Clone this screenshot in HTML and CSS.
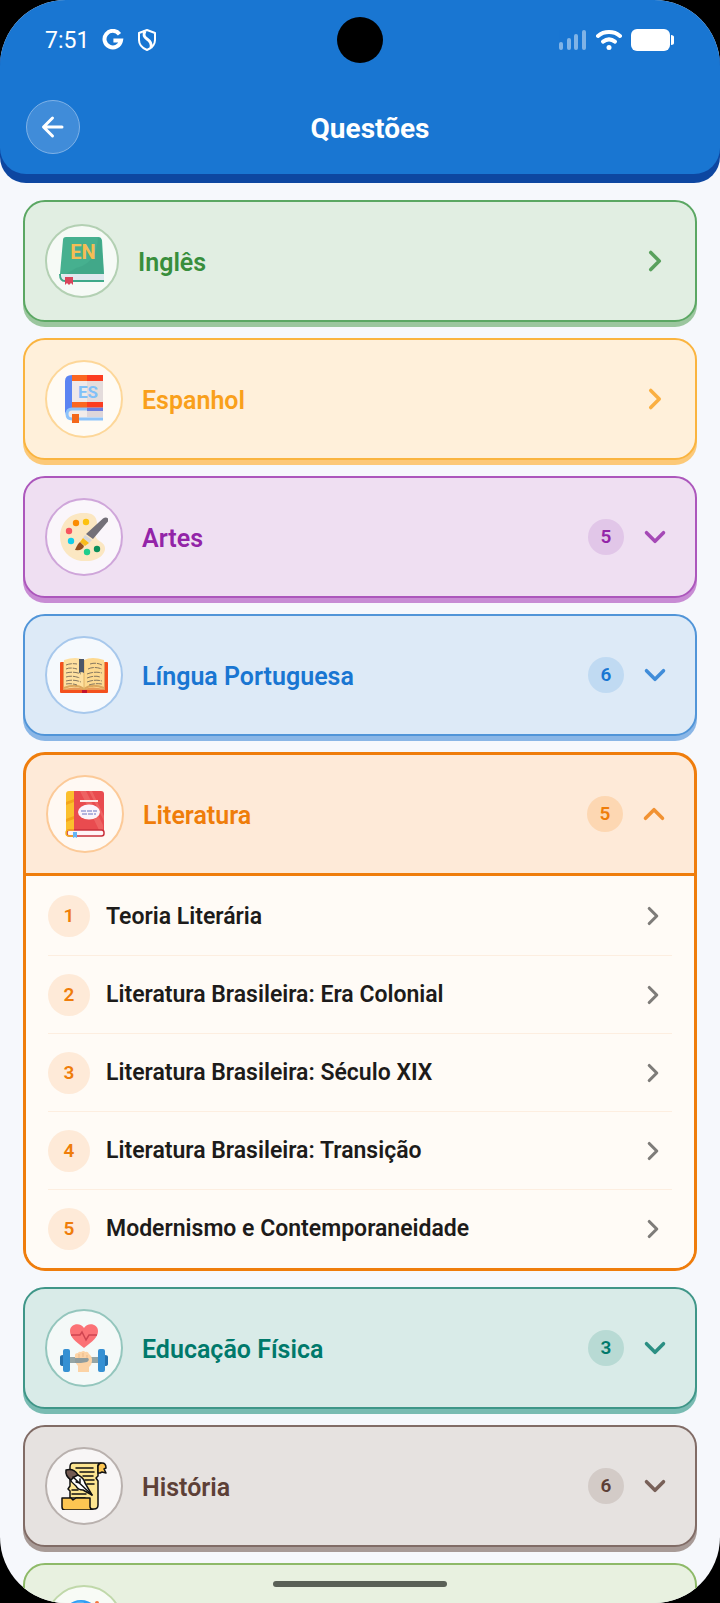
FILE: index.html
```html
<!DOCTYPE html>
<html lang="pt-BR">
<head>
  <meta charset="UTF-8" />
  <meta name="viewport" content="width=device-width, initial-scale=1.0"/>
  <title>Questões</title>
  <link rel="stylesheet" href="styles.css">
</head>
<body>

  <!-- shared icons -->
  <svg class="sprite" aria-hidden="true">
    <symbol id="chevron-right" viewBox="0 0 24 24"><path d="M9 6l6 6-6 6"/></symbol>
    <symbol id="chevron-down" viewBox="0 0 24 24"><path d="M6 9l6 6 6-6"/></symbol>
    <symbol id="chevron-up" viewBox="0 0 24 24"><path d="M6 15l6-6 6 6"/></symbol>
  </svg>

  <div class="screen">
    <header class="app-header">
      <div class="status-bar">
        <div class="status-left">
          <span class="clock">7:51</span>
          <svg width="22" height="22" viewBox="0 0 22 22" fill="none" stroke="#fff" stroke-width="4">
            <path d="M17.5 5.2A8.3 8.3 0 1 0 19 11.6H11.4"/>
          </svg>
          <svg width="20" height="24" viewBox="0 0 20 24" fill="none" stroke="#fff" stroke-width="2" stroke-linejoin="round">
            <path d="M10 2l8 3v7c0 5-3 8-8 10-5-2-8-5-8-10V5z"/>
            <path d="M8 3c-2 4-1 6 2 8s5 5 4 9" stroke-width="3"/>
          </svg>
        </div>
        <div class="camera"></div>
        <div class="status-right">
          <svg width="28" height="20" viewBox="0 0 28 20" fill="#fff" opacity=".45">
            <rect x="0" y="12" width="4" height="8" rx="2"/>
            <rect x="8" y="8" width="4" height="12" rx="2"/>
            <rect x="15" y="4" width="4" height="16" rx="2"/>
            <rect x="23" y="0" width="4" height="20" rx="2"/>
          </svg>
          <svg width="26" height="20" viewBox="0 0 26 20" fill="none" stroke="#fff" stroke-width="4" stroke-linecap="round">
            <path d="M2 6C8 .8 18 .8 24 6"/>
            <path d="M7 11.6c4-3 8-3 12 0"/>
            <circle cx="13" cy="17.4" r="2.5" fill="#fff" stroke="none"/>
          </svg>
          <svg width="44" height="22" viewBox="0 0 44 22" fill="#fff">
            <rect x="0" y="0" width="39" height="22" rx="6"/>
            <path d="M40 6c2 0 3 1 3 2v6c0 1-1 2-3 2z"/>
          </svg>
        </div>
      </div>
      <div class="toolbar">
        <button class="back" type="button" aria-label="Voltar">
          <svg width="28" height="28" viewBox="0 0 28 28" fill="none" stroke="#fff" stroke-width="3" stroke-linecap="round" stroke-linejoin="round">
            <path d="M23 14H5M13.500 5L4.500 14l9 9"/>
          </svg>
        </button>
        <h1>Questões</h1>
      </div>
    </header>

    <main class="subjects">
      <section class="card green">
        <a class="card-head" href="#ingles">
          <span class="avatar small">
            <svg width="48" height="48" viewBox="0 0 48 48">
              <path d="M6 36h40v7H7c-4 0-4-6-1-7z" fill="#dfe8ee"/>
              <path d="M8 0h33q2 0 3 3l2 34H2L5 3q0-3 3-3z" fill="#46b08f"/>
              <path d="M18 31Q38 27 40 1l2 0q1 0 1 3l3 33H8z" fill="#3b9f82" opacity=".45"/>
              <path d="M2 37q0 7 5 7h39" fill="none" stroke="#3fa98a" stroke-width="2"/>
              <path d="M7 40h8v8l-2-2-2 2-2-2-2 2z" fill="#d8455b"/>
              <text class="cover-text" x="25" y="22" font-size="20" fill="#f6bd54">EN</text>
            </svg>
          </span>
          <span class="name">Inglês</span>
          <svg class="chevron"><use href="#chevron-right"/></svg>
        </a>
      </section>

      <section class="card amber">
        <a class="card-head" href="#espanhol">
          <span class="avatar">
            <svg width="48" height="48" viewBox="0 0 48 48">
              <path d="M5 40V6q0-6 7-6v35q-7 0-7 5z" fill="#5b84f2"/>
              <path d="M12 6h31v21H12z" fill="#efe9e9"/>
              <path d="M27 6h16v21H27z" fill="#e4dcdc"/>
              <path d="M12 0h15v6H12zM12 27h15v6H12z" fill="#fb6620"/>
              <path d="M27 0h16v6H27zM27 27h16v6H27z" fill="#fc3d20"/>
              <path d="M43 34H12q-5 0-5 5t5 5h31" fill="#f3ecea" stroke="#8cc3fb" stroke-width="3"/>
              <path d="M27 33h16v3H27z" fill="#6a7cdf"/>
              <path d="M27 36h16v6H27z" fill="#ded6da"/>
              <path d="M12 39h7v9h-7z" fill="#f4681b"/>
              <text class="cover-text" x="28" y="23" font-size="17" fill="#80c0f8">ES</text>
            </svg>
          </span>
          <span class="name">Espanhol</span>
          <svg class="chevron"><use href="#chevron-right"/></svg>
        </a>
      </section>

      <section class="card purple">
        <button class="card-head" type="button" aria-expanded="false">
          <span class="avatar">
            <svg width="48" height="48" viewBox="0 0 48 48">
              <path d="M23 0C35-1 39 7 36 15c-3 7 0 11 5 14s5 8 2 12c-4 6-14 8-22 7C9 46 0 37 0 23 1 9 10 0 23 0z" fill="#fbe7c2"/>
              <circle cx="16" cy="10" r="3.200" fill="#fb8c00"/>
              <circle cx="26" cy="9" r="3.200" fill="#fdc20f"/>
              <circle cx="9" cy="18" r="3.200" fill="#f7555f"/>
              <circle cx="11" cy="28" r="3.200" fill="#12cdea"/>
              <circle cx="27" cy="39" r="3.200" fill="#1fce8c"/>
              <circle cx="37" cy="36" r="3.200" fill="#0b8f5a"/>
              <path d="M43 5.500q3-2 5 0 1 2-1 4L33 26l-7-5z" fill="#737078"/>
              <path d="M25 22l7 5-3 3-6-5z" fill="#d5d8dd"/>
              <path d="M23 25l6 5-4 3-5-4z" fill="#f8bc1c"/>
              <path d="M20 29l4 4q-1 5-9 4 3-7 5-8z" fill="#97501f"/>
            </svg>
          </span>
          <span class="name">Artes</span>
          <span class="count">5</span>
          <svg class="chevron"><use href="#chevron-down"/></svg>
        </button>
      </section>

      <section class="card blue">
        <button class="card-head" type="button" aria-expanded="false">
          <span class="avatar">
            <svg width="48" height="48" viewBox="0 0 48 48">
              <rect x="0" y="11" width="48" height="31" rx="1" fill="#f4511e"/>
              <path d="M3 11h42v28H3z" fill="#e89a58"/>
              <path d="M4 9q12-4 20 0v29q-8-3-20 0z" fill="#fee0a0"/>
              <path d="M44 9Q32 5 24 9v29q8-3 20 0z" fill="#fdd98f"/>
              <path d="M4 37q12-5 20 1 8-6 20-1" fill="none" stroke="#dca85e" stroke-width="2"/>
              <path d="M24 9v29" stroke="#e2b468"/>
              <path d="M6 14q5-2 11-1M6 18q4-2 11 0M6 22q8-2 15 1M6 26q6-2 14 1M6 30q8-2 15 1M6 33q5-1 11 1M30 13q6-2 12 1M28 18q6-3 14 0M27 23q8-3 15-1M27 27q8-3 13-1M27 31q8-3 15-1M29 34q6-2 13-1" fill="none" stroke="#84765f" stroke-dasharray="6 1"/>
              <path d="M19 8h5v14l-2-1-3 1z" fill="#4b5669"/>
              <path d="M22 39h5v3h-5z" fill="#c4122d"/>
            </svg>
          </span>
          <span class="name">Língua Portuguesa</span>
          <span class="count">6</span>
          <svg class="chevron"><use href="#chevron-down"/></svg>
        </button>
      </section>

      <section class="card orange open">
        <button class="card-head" type="button" aria-expanded="true" aria-controls="literatura">
          <span class="avatar">
            <svg width="48" height="48" viewBox="0 0 48 48">
              <path d="M8 1h5v40H5V4q0-3 3-3z" fill="#fbc02d"/>
              <path d="M5 12l8-3v3l-8 3zM5 29l8-3v3l-8 3z" fill="#f4a51b"/>
              <path d="M13 1h27q3 0 3 3v36H13z" fill="#e94b4f"/>
              <path d="M19 1h6l17 34v5h-4zM28 1h3l12 25v5z" fill="#f27370" opacity=".6"/>
              <path d="M19 11h18" stroke="#fdeaea" stroke-width="2"/>
              <ellipse cx="28" cy="22" rx="11" ry="7.500" fill="#fbf3fa"/>
              <path d="M20 21h16M21 24h14" fill="none" stroke="#6a75c4" stroke-dasharray="5 1"/>
              <rect x="6" y="40" width="37" height="6" rx="2.500" fill="#fff5f7" stroke="#c9303b" stroke-width="1.500"/>
              <path d="M13 46H8q-3 0-3-3t3-3h5" fill="none" stroke="#f7b21f" stroke-width="1.500"/>
              <path d="M12 42h4v6l-2-1-2 1z" fill="#64b5f6"/>
            </svg>
          </span>
          <span class="name">Literatura</span>
          <span class="count">5</span>
          <svg class="chevron"><use href="#chevron-up"/></svg>
        </button>
        <ol class="topics" id="literatura">
          <li><a href="#teoria"><span class="num">1</span><span class="topic">Teoria Literária</span><svg class="chevron"><use href="#chevron-right"/></svg></a></li>
          <li><a href="#colonial"><span class="num">2</span><span class="topic">Literatura Brasileira: Era Colonial</span><svg class="chevron"><use href="#chevron-right"/></svg></a></li>
          <li><a href="#seculo-xix"><span class="num">3</span><span class="topic">Literatura Brasileira: Século XIX</span><svg class="chevron"><use href="#chevron-right"/></svg></a></li>
          <li><a href="#transicao"><span class="num">4</span><span class="topic">Literatura Brasileira: Transição</span><svg class="chevron"><use href="#chevron-right"/></svg></a></li>
          <li><a href="#modernismo"><span class="num">5</span><span class="topic">Modernismo e Contemporaneidade</span><svg class="chevron"><use href="#chevron-right"/></svg></a></li>
        </ol>
      </section>

      <section class="card teal">
        <button class="card-head" type="button" aria-expanded="false">
          <span class="avatar">
            <svg width="48" height="48" viewBox="0 0 48 48">
              <path d="M24 24C15 17 10 13 10 7c0-8 11-9 14-3 3-6 14-5 14 3 0 6-5 10-14 17z" fill="#fb7276"/>
              <path d="M11 11h9l2-3 4 8 3-5h8" fill="none" stroke="#cf4450" stroke-width="1.500"/>
              <path d="M10 33h28v6H10z" fill="#95a5a5"/>
              <path d="M0 33q0-2 3-2v11q-3 0-3-2zM48 33q0-2-3-2v11q3 0 3-2z" fill="#2471ae"/>
              <rect x="3" y="25" width="7" height="23" rx="2" fill="#3590d3"/>
              <rect x="38" y="25" width="7" height="23" rx="2" fill="#3590d3"/>
              <path d="M15 31q0-2 3-2 1-2 3-1 3-2 4 0 3-1 4 2 3 2 3 6 0 5-3 7v5H18v-6q-3-3-3-6z" fill="#fcd3a5"/>
              <path d="M15 34h13q2 2-1 4l-6 1h-6z" fill="#8f9c9d"/>
              <path d="M19 30v4M23 29v4M27 31v3" stroke="#e9b98a"/>
            </svg>
          </span>
          <span class="name">Educação Física</span>
          <span class="count">3</span>
          <svg class="chevron"><use href="#chevron-down"/></svg>
        </button>
      </section>

      <section class="card brown">
        <button class="card-head" type="button" aria-expanded="false">
          <span class="avatar">
            <svg width="48" height="48" viewBox="0 0 48 48" stroke="#111" stroke-width="1.500" stroke-linejoin="round" stroke-linecap="round">
              <path d="M13 1h28q-4 1-3 5v8l-2 2 2 3v24q0 4-4 4h-6l-3-11H10v-7l-2-2 2-3V5q0-4 3-4z" fill="#fde590"/>
              <path d="M38 11V4q1-3 4-3 4 0 4 5l-2 1 2 4-4-1-2 1z" fill="#fdc652"/>
              <path d="M2 36h9l2 2 3-2h14v9q1 3 3 3H5q-3 0-3-3z" fill="#fdc652"/>
              <path d="M16 6h17M20 10h14M23 14h10M25 18h9M27 22h7M12 28h6M12 32h14" fill="none"/>
              <path d="M9 16q3-3 9-3 6 3 7 8l7 12-9-5q-5 0-7-4-5-4-7-8z" fill="#fff"/>
              <path d="M6 8q8-2 12 5l-4 2-3 3q-6-4-5-10z" fill="#735a52"/>
              <path d="M13 15l19 18M16 20l4 1M20 17l0 4" fill="none"/>
            </svg>
          </span>
          <span class="name">História</span>
          <span class="count">6</span>
          <svg class="chevron"><use href="#chevron-down"/></svg>
        </button>
      </section>

      <section class="card lime">
        <button class="card-head" type="button" aria-expanded="false" aria-label="Próxima matéria">
          <span class="avatar">
            <svg width="48" height="48" viewBox="0 0 48 48">
              <circle cx="21" cy="19" r="19" fill="#2f9df4"/>
              <path d="M8 8q8-8 16-6l-4 7-9 4z" fill="#58b7f8"/>
              <circle cx="37" cy="3" r="2" fill="#f4753a"/>
            </svg>
          </span>
        </button>
      </section>
    </main>

    <div class="home-indicator"></div>
  </div>

</body>
</html>
```
FILE: styles.css
```css
:root {
  --primary: #1976d2;
  --primary-dark: #0d47a1;
  --page-bg: #f6f8fc;
  --topic-color: #1d1b1a;
}

* {
  margin: 0;
  padding: 0;
  box-sizing: border-box;
}

body {
  font-family: Roboto, "Noto Sans", sans-serif;
  background: #000;
}

.sprite {
  position: absolute;
  width: 0;
  height: 0;
}

.screen {
  position: relative;
  height: 100vh;
  background: var(--page-bg);
  border-radius: 66px;
  overflow: hidden;
}

/* header */

.app-header {
  background: var(--primary);
  border-radius: 0 0 26px 26px;
  box-shadow: 0 9px 0 var(--primary-dark);
  color: #fff;
}

.status-bar {
  display: grid;
  grid-template-columns: 1fr auto 1fr;
  align-items: center;
  height: 80px;
  padding: 0 45px;
}

.status-left,
.status-right {
  display: flex;
  align-items: center;
}

.status-left {
  gap: 13px;
}

.status-right {
  justify-content: flex-end;
  gap: 9px;
}

.clock {
  font-size: 23px;
}

.camera {
  width: 46px;
  height: 46px;
  border-radius: 50%;
  background: #000;
}

.toolbar {
  display: grid;
  grid-template-columns: 54px 1fr 34px;
  align-items: center;
  padding: 20px 26px;
}

.toolbar h1 {
  padding-top: 4px;
  font-size: 28px;
  font-weight: 700;
  line-height: 36px;
  text-align: center;
}

.back {
  display: flex;
  align-items: center;
  justify-content: center;
  width: 54px;
  height: 54px;
  border: 1px solid #7fb2e7;
  border-radius: 50%;
  background: #408cd9;
  cursor: pointer;
}

/* subject cards */

.subjects {
  display: flex;
  flex-direction: column;
  gap: 16px;
  padding: 26px 23px;
}

.card {
  border: 2px solid var(--line);
  border-radius: 22px;
  background: var(--bg);
  box-shadow: 0 5px 0 var(--shadow);
}

.card-head {
  display: flex;
  align-items: center;
  width: 100%;
  height: 118px;
  padding: 0 23px 0 20px;
  border: none;
  background: none;
  font-family: inherit;
  text-align: left;
  text-decoration: none;
  cursor: pointer;
}

.avatar {
  display: flex;
  align-items: center;
  justify-content: center;
  width: 78px;
  height: 78px;
  border: 2px solid var(--ring);
  border-radius: 50%;
  background: rgba(255, 255, 255, 0.7);
}

.avatar.small {
  width: 74px;
  height: 74px;
}

.cover-text {
  font-weight: 700;
  text-anchor: middle;
}

.name {
  flex: 1;
  margin-left: 19px;
  padding-top: 2px;
  font-size: 25px;
  font-weight: 600;
  color: var(--main);
}

.count {
  width: 36px;
  margin-right: 14px;
  border-radius: 50%;
  background: var(--badge);
  color: var(--main);
  font-size: 19px;
  font-weight: 600;
  line-height: 36px;
  text-align: center;
}

.chevron {
  width: 34px;
  height: 34px;
  fill: none;
  stroke: var(--main);
  stroke-width: 2.5;
  stroke-linecap: round;
  stroke-linejoin: round;
  opacity: 0.8;
}

/* expanded card */

.card.open {
  border-width: 3px;
  box-shadow: none;
}

.open .card-head {
  height: 121px;
  border-bottom: 3px solid var(--line);
}

.topics {
  padding: 1px 22px;
  border-radius: 0 0 19px 19px;
  background: #fffbf6;
  list-style: none;
}

.topics li + li {
  border-top: 1px solid #fdeee0;
}

.topics a {
  display: flex;
  align-items: center;
  height: 77px;
  padding-right: 4px;
  text-decoration: none;
}

.topics li:first-child a {
  height: 78px;
}

.num {
  width: 42px;
  border-radius: 50%;
  background: var(--bg);
  color: var(--main);
  font-size: 19px;
  font-weight: 600;
  line-height: 42px;
  text-align: center;
}

.topic {
  flex: 1;
  margin-left: 16px;
  font-size: 23px;
  font-weight: 600;
  color: var(--topic-color);
}

.topics .chevron {
  width: 30px;
  height: 30px;
  stroke: #5f5d5a;
}

/* colour themes */

.green {
  --main: #388e3c;
  --bg: #e1eee2;
  --line: #5ba763;
  --shadow: #9bc69e;
  --ring: #b3d0b3;
}

.amber {
  --main: #f9a01b;
  --bg: #fff0da;
  --line: #fab43f;
  --shadow: #fcc978;
  --ring: #fdd799;
}

.purple {
  --main: #9324a8;
  --bg: #efdff2;
  --line: #ac57bc;
  --shadow: #c88cd4;
  --ring: #cfa6da;
  --badge: #e1c6e8;
}

.blue {
  --main: #1976d2;
  --bg: #ddeaf7;
  --line: #5195d8;
  --shadow: #8ab6e6;
  --ring: #a7c8ec;
  --badge: #c0daf2;
}

.orange {
  --main: #ef7d0a;
  --bg: #feead8;
  --line: #ef7d0c;
  --ring: #fcca98;
  --badge: #fdd7b2;
}

.teal {
  --main: #00796b;
  --bg: #d9ebe8;
  --line: #3f9688;
  --shadow: #78bbb2;
  --ring: #94c6bd;
  --badge: #b8dad4;
}

.brown {
  --main: #5d4037;
  --bg: #e6e2e0;
  --line: #816c66;
  --shadow: #a89b97;
  --ring: #b9b1ae;
  --badge: #d3cbc7;
}

.lime {
  --main: #689f38;
  --bg: #e8f1e0;
  --line: #8eba69;
  --shadow: #b3d199;
  --ring: #c0d8aa;
}

.home-indicator {
  position: absolute;
  bottom: 16px;
  left: 50%;
  width: 174px;
  height: 6px;
  margin-left: -87px;
  border-radius: 3px;
  background: #5a6157;
}
```
